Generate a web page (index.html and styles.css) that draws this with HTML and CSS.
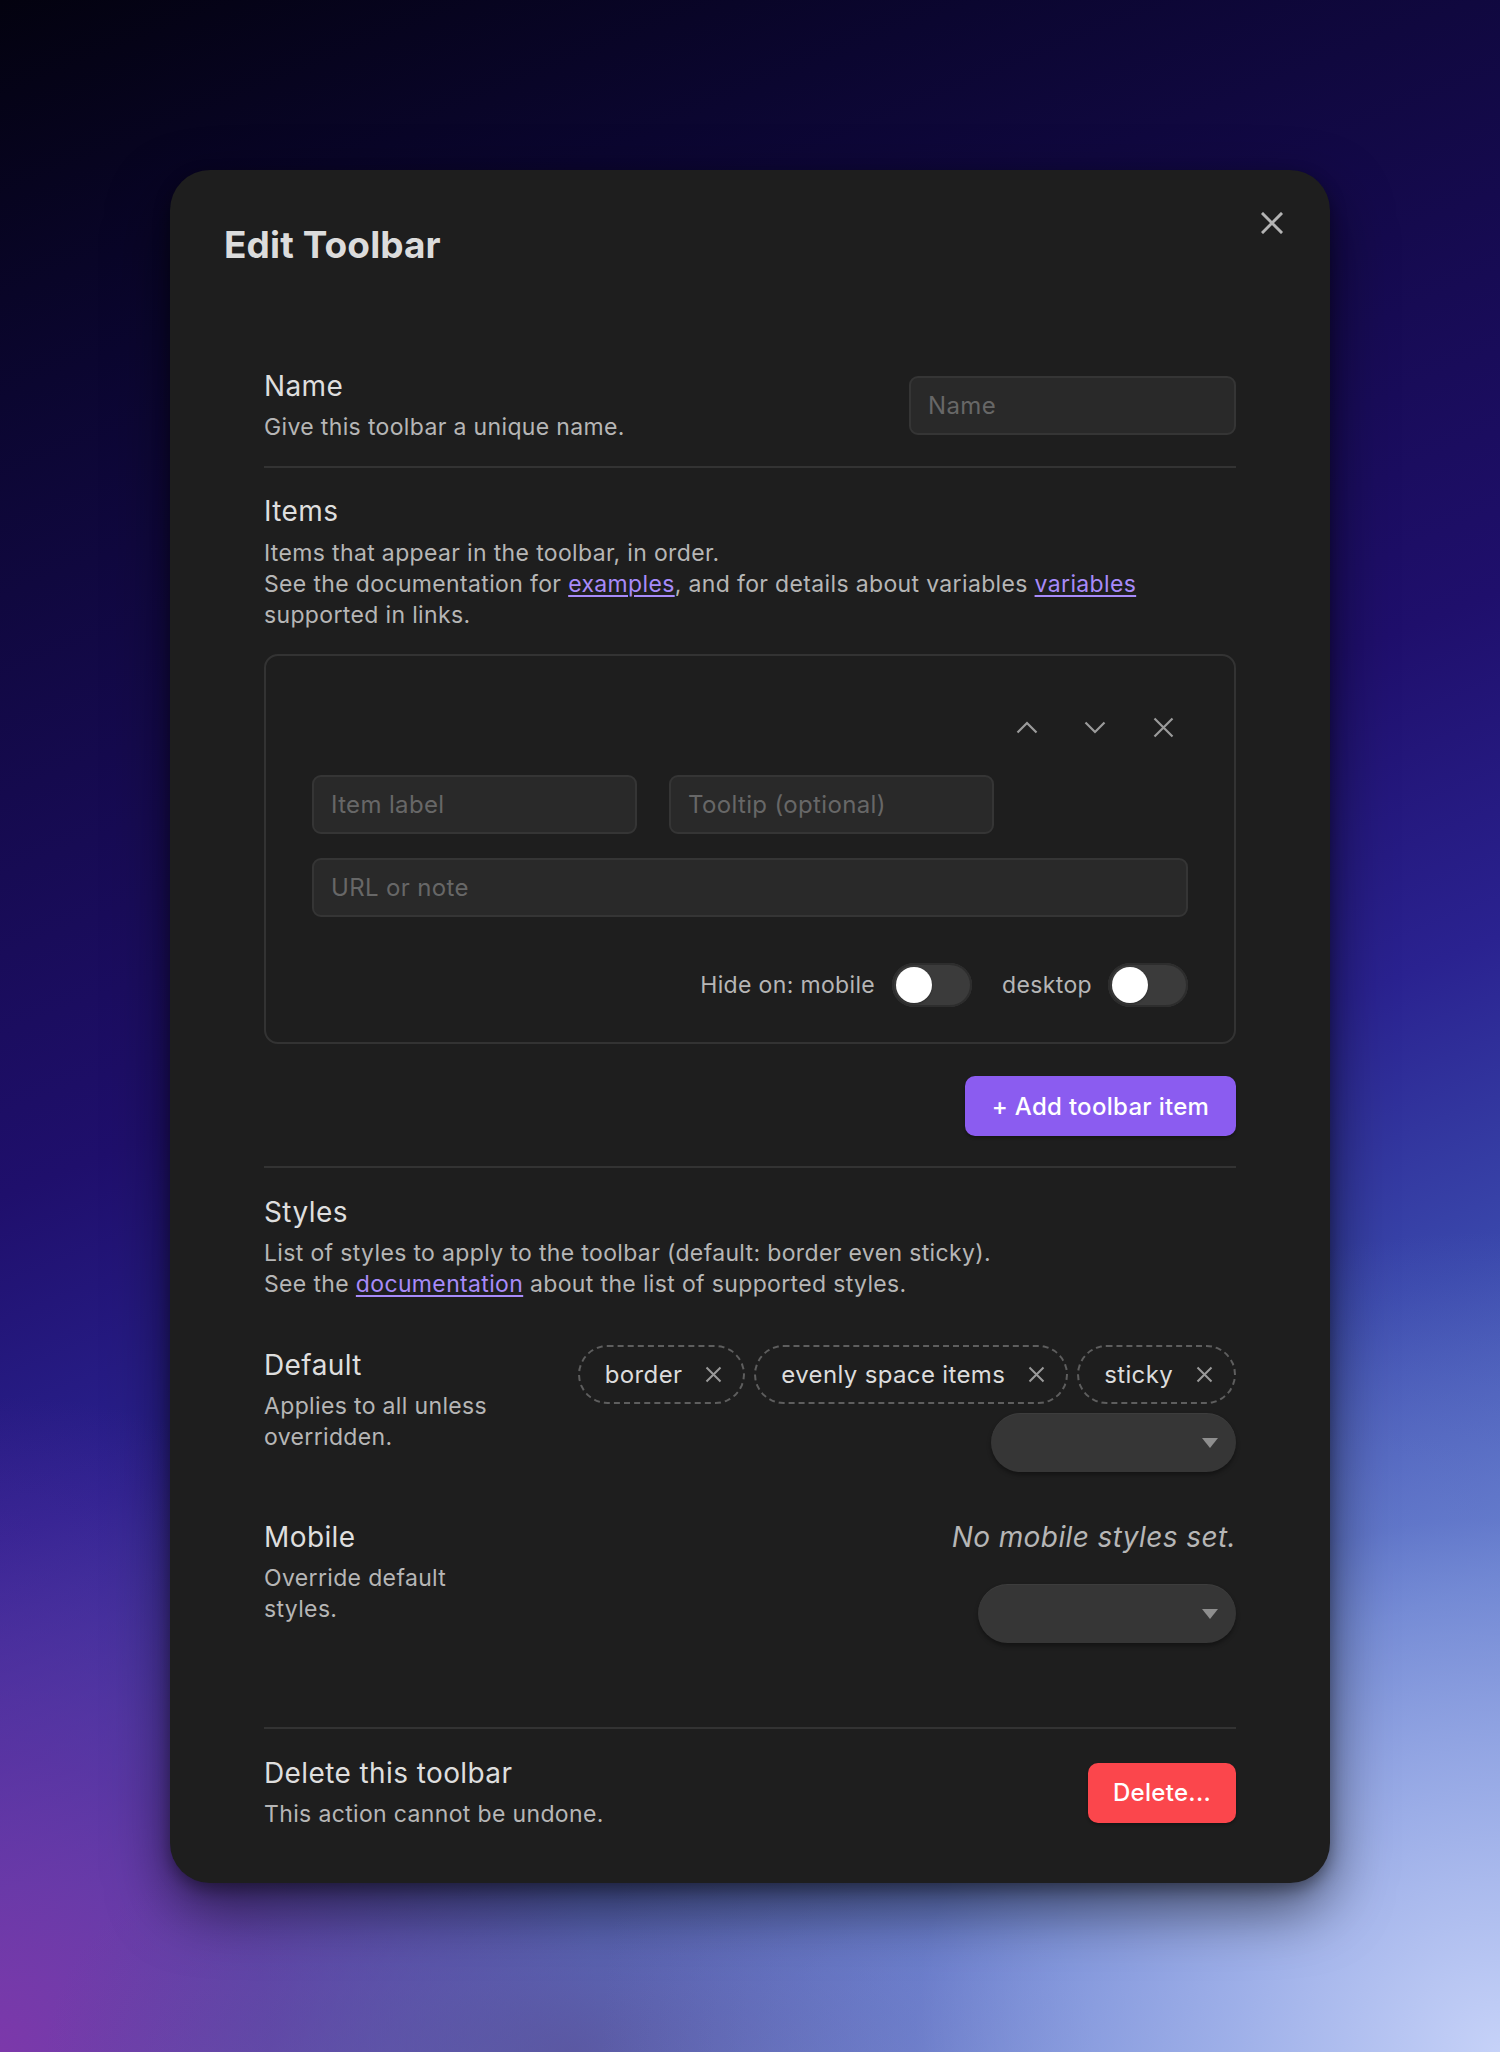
FILE: index.html
```html
<!DOCTYPE html>
<html lang="en">
<head>
<meta charset="utf-8">
<title>Edit Toolbar</title>
<link rel="stylesheet" href="styles.css">
</head>
<body>
<div class="modal">
  <button class="modal-close" aria-label="Close">
    <svg width="22" height="22" viewBox="0 0 22 22"><path d="M2 2 L20 20 M20 2 L2 20" stroke="#b4b4b4" stroke-width="3" stroke-linecap="square" fill="none"/></svg>
  </button>
  <h1 class="modal-title">Edit Toolbar</h1>
  <div class="modal-content">

    <div class="setting setting-name">
      <div class="setting-info">
        <div class="setting-label">Name</div>
        <div class="setting-desc">Give this toolbar a unique name.</div>
      </div>
      <div class="setting-control">
        <input class="text-input name-input" type="text" placeholder="Name">
      </div>
    </div>

    <section class="section section-items">
      <div class="setting-info">
        <div class="setting-label">Items</div>
        <div class="setting-desc">Items that appear in the toolbar, in order.<br>See the documentation for <a href="#">examples</a>, and for details about variables <a href="#">variables</a> supported in links.</div>
      </div>
      <div class="item-card">
        <div class="item-actions">
          <button class="icon-btn" aria-label="Move up"><svg width="22" height="13" viewBox="0 0 22 13"><path d="M1.5 11.5 L11 2 L20.5 11.5" stroke="#9b9b9b" stroke-width="2.2" fill="none"/></svg></button>
          <button class="icon-btn" aria-label="Move down"><svg width="22" height="13" viewBox="0 0 22 13"><path d="M1.5 1.5 L11 11 L20.5 1.5" stroke="#9b9b9b" stroke-width="2.2" fill="none"/></svg></button>
          <button class="icon-btn" aria-label="Remove"><svg width="21" height="21" viewBox="0 0 21 21"><path d="M1.5 1.5 L19.5 19.5 M19.5 1.5 L1.5 19.5" stroke="#9b9b9b" stroke-width="2.2" fill="none"/></svg></button>
        </div>
        <div class="item-row">
          <input class="text-input half-input" type="text" placeholder="Item label">
          <input class="text-input half-input" type="text" placeholder="Tooltip (optional)">
        </div>
        <input class="text-input url-input" type="text" placeholder="URL or note">
        <div class="item-toggles">
          <span class="toggle-label">Hide on: mobile</span>
          <span class="toggle"><span class="toggle-knob"></span></span>
          <span class="toggle-label toggle-label-second">desktop</span>
          <span class="toggle"><span class="toggle-knob"></span></span>
        </div>
      </div>
      <div class="add-row">
        <button class="btn btn-accent">+ Add toolbar item</button>
      </div>
    </section>

    <section class="section section-styles">
      <div class="setting-info">
        <div class="setting-label">Styles</div>
        <div class="setting-desc">List of styles to apply to the toolbar (default: border even sticky).<br>See the <a href="#">documentation</a> about the list of supported styles.</div>
      </div>

      <div class="setting setting-default">
        <div class="setting-info narrow">
          <div class="setting-label">Default</div>
          <div class="setting-desc">Applies to all unless overridden.</div>
        </div>
        <div class="chip-control">
          <span class="chip">border<svg class="chip-x" width="17" height="17" viewBox="0 0 17 17"><path d="M1.5 1.5 L15.5 15.5 M15.5 1.5 L1.5 15.5" stroke="#9a9a9a" stroke-width="2" fill="none"/></svg></span>
          <span class="chip">evenly space items<svg class="chip-x" width="17" height="17" viewBox="0 0 17 17"><path d="M1.5 1.5 L15.5 15.5 M15.5 1.5 L1.5 15.5" stroke="#9a9a9a" stroke-width="2" fill="none"/></svg></span>
          <span class="chip">sticky<svg class="chip-x" width="17" height="17" viewBox="0 0 17 17"><path d="M1.5 1.5 L15.5 15.5 M15.5 1.5 L1.5 15.5" stroke="#9a9a9a" stroke-width="2" fill="none"/></svg></span>
          <span class="select select-default"><svg width="16" height="10" viewBox="0 0 16 10"><path d="M0 0 L16 0 L8 10 Z" fill="#8e8e8e"/></svg></span>
        </div>
      </div>

      <div class="setting setting-mobile">
        <div class="setting-info narrow">
          <div class="setting-label">Mobile</div>
          <div class="setting-desc">Override default styles.</div>
        </div>
        <div class="mobile-control">
          <div class="empty-note">No mobile styles set.</div>
          <span class="select select-mobile"><svg width="16" height="10" viewBox="0 0 16 10"><path d="M0 0 L16 0 L8 10 Z" fill="#8e8e8e"/></svg></span>
        </div>
      </div>
    </section>

    <div class="setting section setting-delete">
      <div class="setting-info">
        <div class="setting-label">Delete this toolbar</div>
        <div class="setting-desc">This action cannot be undone.</div>
      </div>
      <div class="setting-control">
        <button class="btn btn-danger">Delete...</button>
      </div>
    </div>

  </div>
</div>
</body>
</html>
```

FILE: styles.css
```css
* { box-sizing: border-box; }

html, body {
  margin: 0;
  padding: 0;
}

body {
  width: 1500px;
  min-height: 2052px;
  font-family: Inter, "Noto Sans", "Liberation Sans", sans-serif;
  color: #dadada;
  display: flex;
  justify-content: center;
  align-items: flex-start;
  padding-top: 170px;
  background:
    radial-gradient(ellipse 60% 40% at 100% 100%, rgba(198, 210, 248, 1) 0%, rgba(165, 182, 236, 0.85) 30%, rgba(120, 140, 215, 0.4) 65%, rgba(90, 110, 200, 0) 100%),
    radial-gradient(ellipse 35% 14% at 38% 100%, rgba(88, 78, 150, 0.75) 0%, rgba(88, 78, 150, 0) 100%),
    radial-gradient(ellipse 40% 32% at 0% 100%, rgba(124, 56, 170, 1) 0%, rgba(108, 48, 162, 0.65) 45%, rgba(80, 30, 140, 0) 100%),
    linear-gradient(158deg, #03020f 0%, #0b0630 15%, #150a4e 30%, #1f0f6c 45%, #2a2290 58%, #3a48ac 70%, #5a74c8 82%, #7e90d8 100%);
}

.modal {
  position: relative;
  width: 1160px;
  background: #1e1e1e;
  border-radius: 40px;
  padding: 53px 54px 53px;
  box-shadow: 0 26px 60px rgba(0, 0, 0, 0.55), 0 6px 16px rgba(0, 0, 0, 0.35);
}

.modal-close {
  position: absolute;
  top: 32px;
  right: 37px;
  width: 42px;
  height: 42px;
  border: none;
  background: transparent;
  padding: 0;
  display: flex;
  align-items: center;
  justify-content: center;
}

.modal-title {
  margin: 0;
  font-size: 37px;
  line-height: 44px;
  font-weight: 700;
  color: #dcdcdc;
  letter-spacing: 0.1px;
}

.modal-content {
  margin-top: 76px;
  padding: 0 40px;
}

.setting {
  display: flex;
  align-items: center;
}

.setting-info {
  flex: 1 1 auto;
}

.setting-label {
  font-size: 28px;
  line-height: 36px;
  letter-spacing: 0.4px;
  color: #dedede;
}

.setting-desc {
  margin-top: 8px;
  font-size: 23px;
  line-height: 31px;
  letter-spacing: 0.35px;
  color: #b6b6b6;
}

.setting-desc a {
  color: #a88bfa;
  text-decoration: underline;
  text-underline-offset: 3px;
  text-decoration-thickness: 2px;
}

.setting-control {
  flex: 0 0 auto;
  display: flex;
  justify-content: flex-end;
}

.text-input {
  height: 59px;
  background: #292929;
  border: 2px solid #353535;
  border-radius: 9px;
  padding: 0 17px;
  font-family: Inter, "Noto Sans", "Liberation Sans", sans-serif;
  font-size: 24px;
  letter-spacing: 0.35px;
  color: #dadada;
  outline: none;
}

.text-input::placeholder {
  color: #676767;
}

.setting-name {
  padding: 25px 0 23px;
}

.name-input {
  width: 327px;
}

.section {
  border-top: 2px solid #333333;
}

.section-items {
  padding: 25px 0 30px;
}

.section-items .setting-desc {
  margin-top: 9px;
}

.item-card {
  margin-top: 23px;
  border: 2px solid #333333;
  border-radius: 14px;
  padding: 46px 46px 35px;
}

.item-actions {
  display: flex;
  justify-content: flex-end;
  gap: 18px;
}

.icon-btn {
  width: 50px;
  height: 50px;
  border: none;
  background: transparent;
  padding: 0;
  display: flex;
  align-items: center;
  justify-content: center;
}

.item-row {
  margin-top: 23px;
  display: flex;
  gap: 32px;
}

.half-input {
  width: 325px;
}

.url-input {
  display: block;
  width: 100%;
  margin-top: 24px;
}

.item-toggles {
  margin-top: 46px;
  display: flex;
  justify-content: flex-end;
  align-items: center;
}

.toggle-label {
  font-size: 23px;
  letter-spacing: 0.35px;
  color: #b6b6b6;
  margin-right: 17px;
}

.toggle-label-second {
  margin-left: 30px;
  margin-right: 16px;
}

.toggle {
  width: 80px;
  height: 44px;
  border-radius: 22px;
  background: #3b3b3b;
  box-shadow: inset 0 0 0 2px #2d2d2d;
  display: flex;
  align-items: center;
  padding-left: 4px;
}

.toggle-knob {
  width: 36px;
  height: 36px;
  border-radius: 50%;
  background: #ffffff;
  box-shadow: 0 1px 2px rgba(0, 0, 0, 0.3);
}

.add-row {
  margin-top: 32px;
  display: flex;
  justify-content: flex-end;
}

.btn {
  height: 60px;
  border: none;
  border-radius: 10px;
  font-family: Inter, "Noto Sans", "Liberation Sans", sans-serif;
  font-size: 24px;
  font-weight: 500;
  letter-spacing: 0.3px;
  color: #ffffff;
  padding: 0 24px;
  box-shadow: 0 2px 3px rgba(0, 0, 0, 0.3);
}

.btn-accent {
  background: #8b5cf0;
  width: 271px;
  padding: 0;
}

.btn-danger {
  background: #fb464c;
  width: 148px;
  padding: 0;
}

.section-styles {
  padding: 26px 0 84px;
}

.setting-default {
  margin-top: 45px;
  align-items: flex-start;
}

.narrow {
  flex: 0 0 240px;
  margin-top: 2px;
}

.chip-control {
  flex: 1 1 auto;
  display: flex;
  flex-wrap: wrap;
  justify-content: flex-end;
  gap: 9px;
}

.chip {
  height: 59px;
  display: inline-flex;
  align-items: center;
  gap: 23px;
  border: 2px dashed #5e5e5e;
  border-radius: 30px;
  padding: 0 21px 0 25px;
  font-size: 24px;
  letter-spacing: 0.35px;
  color: #dcdcdc;
}

.select {
  height: 59px;
  border-radius: 30px;
  background: #363636;
  box-shadow: 0 3px 4px rgba(0, 0, 0, 0.35), inset 0 1px 0 rgba(255, 255, 255, 0.04);
  display: flex;
  align-items: center;
  justify-content: flex-end;
  padding-right: 18px;
}

.select-default {
  width: 245px;
}

.select-mobile {
  width: 258px;
  margin-top: 29px;
}

.setting-mobile {
  margin-top: 47px;
  align-items: flex-start;
}

.setting-mobile .narrow {
  margin-top: 0;
}

.mobile-control {
  flex: 1 1 auto;
  display: flex;
  flex-direction: column;
  align-items: flex-end;
}

.empty-note {
  font-size: 28px;
  line-height: 36px;
  font-style: italic;
  letter-spacing: 0.4px;
  color: #b6b6b6;
}

.setting-delete {
  padding-top: 26px;
}
```
